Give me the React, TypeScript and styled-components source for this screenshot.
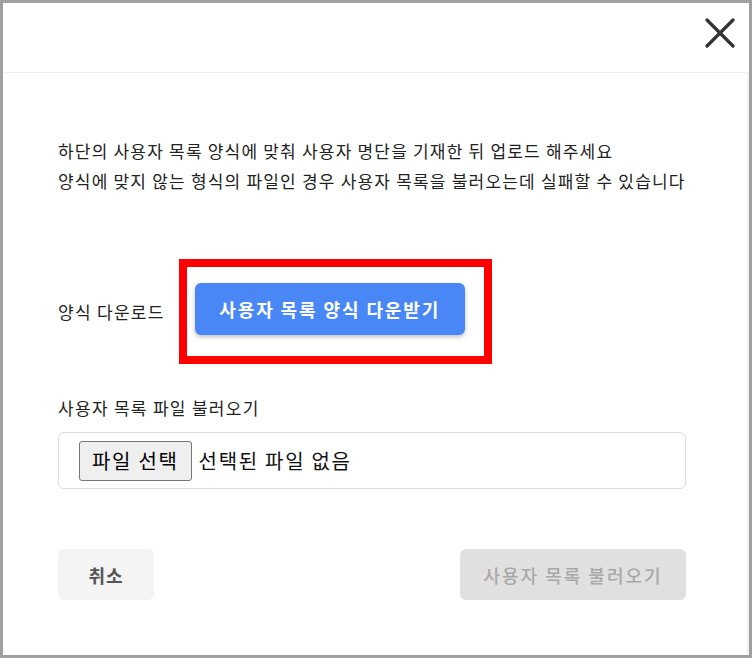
import React from 'react';
import styled, { createGlobalStyle } from 'styled-components';

const GlobalStyle = createGlobalStyle`
	html, body {
		margin: 0;
		padding: 0;
		background: #ffffff;
	}
	* {
		box-sizing: border-box;
	}
	body {
		font-family: 'Noto Sans CJK KR', 'Noto Sans', sans-serif;
		color: #222;
	}
`;

const Modal = styled.div`
	width: 752px;
	height: 658px;
	border: 3px solid #a0a0a0;
	background: #fff;
	display: flex;
	flex-direction: column;
`;

const Header = styled.div`
	height: 70px;
	border-bottom: 1px solid #efefef;
	display: flex;
	justify-content: flex-end;
	align-items: flex-start;
	padding: 13px 12px 0 0;
	flex-shrink: 0;
`;

const CloseButton = styled.button`
	width: 34px;
	height: 34px;
	padding: 0;
	border: none;
	background: transparent;
	cursor: pointer;
	display: flex;
	align-items: center;
	justify-content: center;
`;

const Body = styled.div`
	flex: 1;
	padding: 63px 61px 0 55px;
	border-right: 2px solid #f3f3f3;
	display: flex;
	flex-direction: column;
`;

const Guide = styled.p`
	margin: 0;
	font-size: 17px;
	line-height: 30px;
	letter-spacing: 1.2px;
	color: #222;
	white-space: nowrap;
`;

const DownloadRow = styled.div`
	margin-top: 63px;
	display: flex;
	align-items: center;
	gap: 14px;
`;

const Label = styled.span`
	font-size: 17px;
	line-height: 24px;
	letter-spacing: 1.3px;
	color: #222;
`;

const Highlight = styled.div`
	border: 8px solid #ff0000;
	padding: 16px 19px 21px 8px;
	display: flex;
`;

const PrimaryButton = styled.button`
	width: 270px;
	height: 52px;
	border: none;
	border-radius: 6px;
	background: #4a87f6;
	color: #fff;
	font-family: inherit;
	font-size: 18px;
	font-weight: 700;
	letter-spacing: 1.9px;
	box-shadow: 0 2px 4px rgba(0, 0, 0, 0.25);
	cursor: pointer;
`;

const FieldLabel = styled(Label)`
	display: block;
	margin-top: 32px;
`;

const FileBox = styled.div`
	margin-top: 12px;
	height: 57px;
	border: 1px solid #dcdcdc;
	border-radius: 6px;
	display: flex;
	align-items: center;
	padding: 0 20px;
	gap: 7px;
`;

const FileButton = styled.button`
	height: 40px;
	padding: 0 12px;
	background: #efefef;
	border: 1px solid #767676;
	border-radius: 3px;
	font-family: inherit;
	font-size: 20px;
	letter-spacing: 1.7px;
	color: #000;
	cursor: pointer;
`;

const FileName = styled.span`
	font-size: 20px;
	letter-spacing: 1.7px;
	color: #111;
`;

const Footer = styled.div`
	margin-top: 60px;
	display: flex;
	justify-content: space-between;
`;

const FooterButton = styled.button<{ $variant: 'cancel' | 'disabled' }>`
	height: 51px;
	border: none;
	border-radius: 6px;
	font-family: inherit;
	font-size: 18px;
	letter-spacing: ${(p) => (p.$variant === 'cancel' ? '1px' : '2px')};
	padding: 0;
	width: ${(p) => (p.$variant === 'cancel' ? '96px' : '226px')};
	background: ${(p) => (p.$variant === 'cancel' ? '#f4f4f4' : '#e0e0e0')};
	color: ${(p) => (p.$variant === 'cancel' ? '#555' : '#a8a8a8')};
	font-weight: ${(p) => (p.$variant === 'cancel' ? 700 : 500)};
`;

const CloseIcon = () => (
	<svg width="30" height="30" viewBox="0 0 30 30">
		<path
			d="M2 2 L28 28 M28 2 L2 28"
			stroke="#333"
			strokeWidth="3.2"
			strokeLinecap="round"
			fill="none"
		/>
	</svg>
);

const App: React.FC = () => {
	return (
		<>
			<GlobalStyle />
			<Modal>
				<Header>
					<CloseButton aria-label="닫기">
						<CloseIcon />
					</CloseButton>
				</Header>
				<Body>
					<Guide>
						하단의 사용자 목록 양식에 맞춰 사용자 명단을 기재한 뒤 업로드 해주세요
						<br />
						양식에 맞지 않는 형식의 파일인 경우 사용자 목록을 불러오는데 실패할 수 있습니다
					</Guide>
					<DownloadRow>
						<Label>양식 다운로드</Label>
						<Highlight>
							<PrimaryButton>사용자 목록 양식 다운받기</PrimaryButton>
						</Highlight>
					</DownloadRow>
					<FieldLabel>사용자 목록 파일 불러오기</FieldLabel>
					<FileBox>
						<FileButton>파일 선택</FileButton>
						<FileName>선택된 파일 없음</FileName>
					</FileBox>
					<Footer>
						<FooterButton $variant="cancel">취소</FooterButton>
						<FooterButton $variant="disabled" disabled>
							사용자 목록 불러오기
						</FooterButton>
					</Footer>
				</Body>
			</Modal>
		</>
	);
};

export default App;
